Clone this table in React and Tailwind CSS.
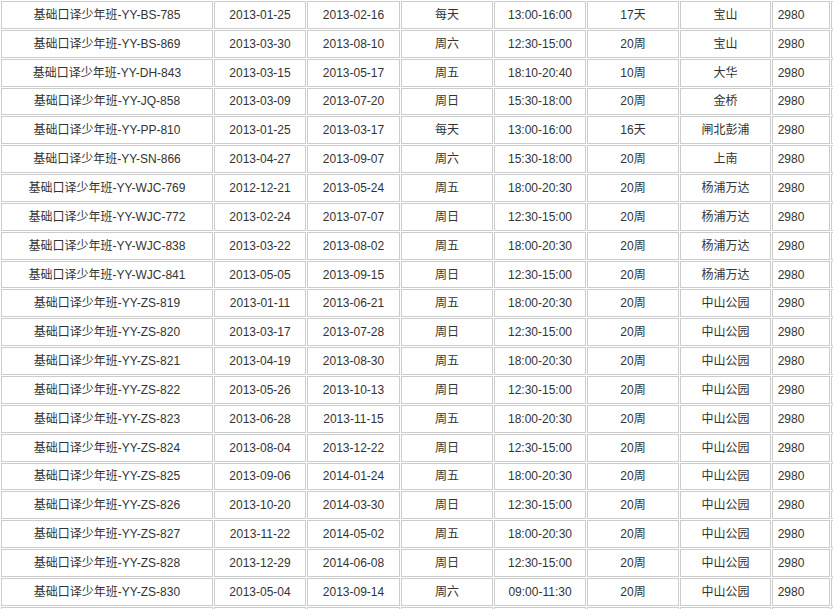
const rows = [
  ['YY-BS-785', '2013-01-25', '2013-02-16', '每天', '13:00-16:00', '17天', '宝山'],
  ['YY-BS-869', '2013-03-30', '2013-08-10', '周六', '12:30-15:00', '20周', '宝山'],
  ['YY-DH-843', '2013-03-15', '2013-05-17', '周五', '18:10-20:40', '10周', '大华'],
  ['YY-JQ-858', '2013-03-09', '2013-07-20', '周日', '15:30-18:00', '20周', '金桥'],
  ['YY-PP-810', '2013-01-25', '2013-03-17', '每天', '13:00-16:00', '16天', '闸北彭浦'],
  ['YY-SN-866', '2013-04-27', '2013-09-07', '周六', '15:30-18:00', '20周', '上南'],
  ['YY-WJC-769', '2012-12-21', '2013-05-24', '周五', '18:00-20:30', '20周', '杨浦万达'],
  ['YY-WJC-772', '2013-02-24', '2013-07-07', '周日', '12:30-15:00', '20周', '杨浦万达'],
  ['YY-WJC-838', '2013-03-22', '2013-08-02', '周五', '18:00-20:30', '20周', '杨浦万达'],
  ['YY-WJC-841', '2013-05-05', '2013-09-15', '周日', '12:30-15:00', '20周', '杨浦万达'],
  ['YY-ZS-819', '2013-01-11', '2013-06-21', '周五', '18:00-20:30', '20周', '中山公园'],
  ['YY-ZS-820', '2013-03-17', '2013-07-28', '周日', '12:30-15:00', '20周', '中山公园'],
  ['YY-ZS-821', '2013-04-19', '2013-08-30', '周五', '18:00-20:30', '20周', '中山公园'],
  ['YY-ZS-822', '2013-05-26', '2013-10-13', '周日', '12:30-15:00', '20周', '中山公园'],
  ['YY-ZS-823', '2013-06-28', '2013-11-15', '周五', '18:00-20:30', '20周', '中山公园'],
  ['YY-ZS-824', '2013-08-04', '2013-12-22', '周日', '12:30-15:00', '20周', '中山公园'],
  ['YY-ZS-825', '2013-09-06', '2014-01-24', '周五', '18:00-20:30', '20周', '中山公园'],
  ['YY-ZS-826', '2013-10-20', '2014-03-30', '周日', '12:30-15:00', '20周', '中山公园'],
  ['YY-ZS-827', '2013-11-22', '2014-05-02', '周五', '18:00-20:30', '20周', '中山公园'],
  ['YY-ZS-828', '2013-12-29', '2014-06-08', '周日', '12:30-15:00', '20周', '中山公园'],
  ['YY-ZS-830', '2013-05-04', '2013-09-14', '周六', '09:00-11:30', '20周', '中山公园'],
];

const cell = 'border border-[#cccccc] h-[27.857px] p-0 text-center align-middle';

export default function App() {
  return (
    <div className="w-[833px] h-[609px] overflow-hidden bg-white">
      <table
        className="table-fixed border-separate border-spacing-[1px] text-[12px] text-[#333333] w-[892px]"
        style={{ fontFamily: '"Liberation Sans", "Noto Sans CJK SC", sans-serif' }}
      >
        <colgroup>
          <col className="w-[212px]" />
          <col className="w-[92px]" />
          <col className="w-[93px]" />
          <col className="w-[92px]" />
          <col className="w-[92px]" />
          <col className="w-[92px]" />
          <col className="w-[91px]" />
          <col className="w-[58px]" />
          <col className="w-[60px]" />
        </colgroup>
        <tbody>
          {rows.map((r) => (
            <tr key={r[0]}>
              <td className={cell}>基础口译少年班-{r[0]}</td>
              <td className={cell}>{r[1]}</td>
              <td className={cell}>{r[2]}</td>
              <td className={cell}>{r[3]}</td>
              <td className={cell}>{r[4]}</td>
              <td className={cell}>{r[5]}</td>
              <td className={cell}>{r[6]}</td>
              <td className={`${cell} pr-[20px]`}>2980</td>
              <td className={cell}></td>
            </tr>
          ))}
          <tr>
            <td className={cell}></td>
            <td className={cell}></td>
            <td className={cell}></td>
            <td className={cell}></td>
            <td className={cell}></td>
            <td className={cell}></td>
            <td className={cell}></td>
            <td className={cell}></td>
            <td className={cell}></td>
          </tr>
        </tbody>
      </table>
    </div>
  );
}
